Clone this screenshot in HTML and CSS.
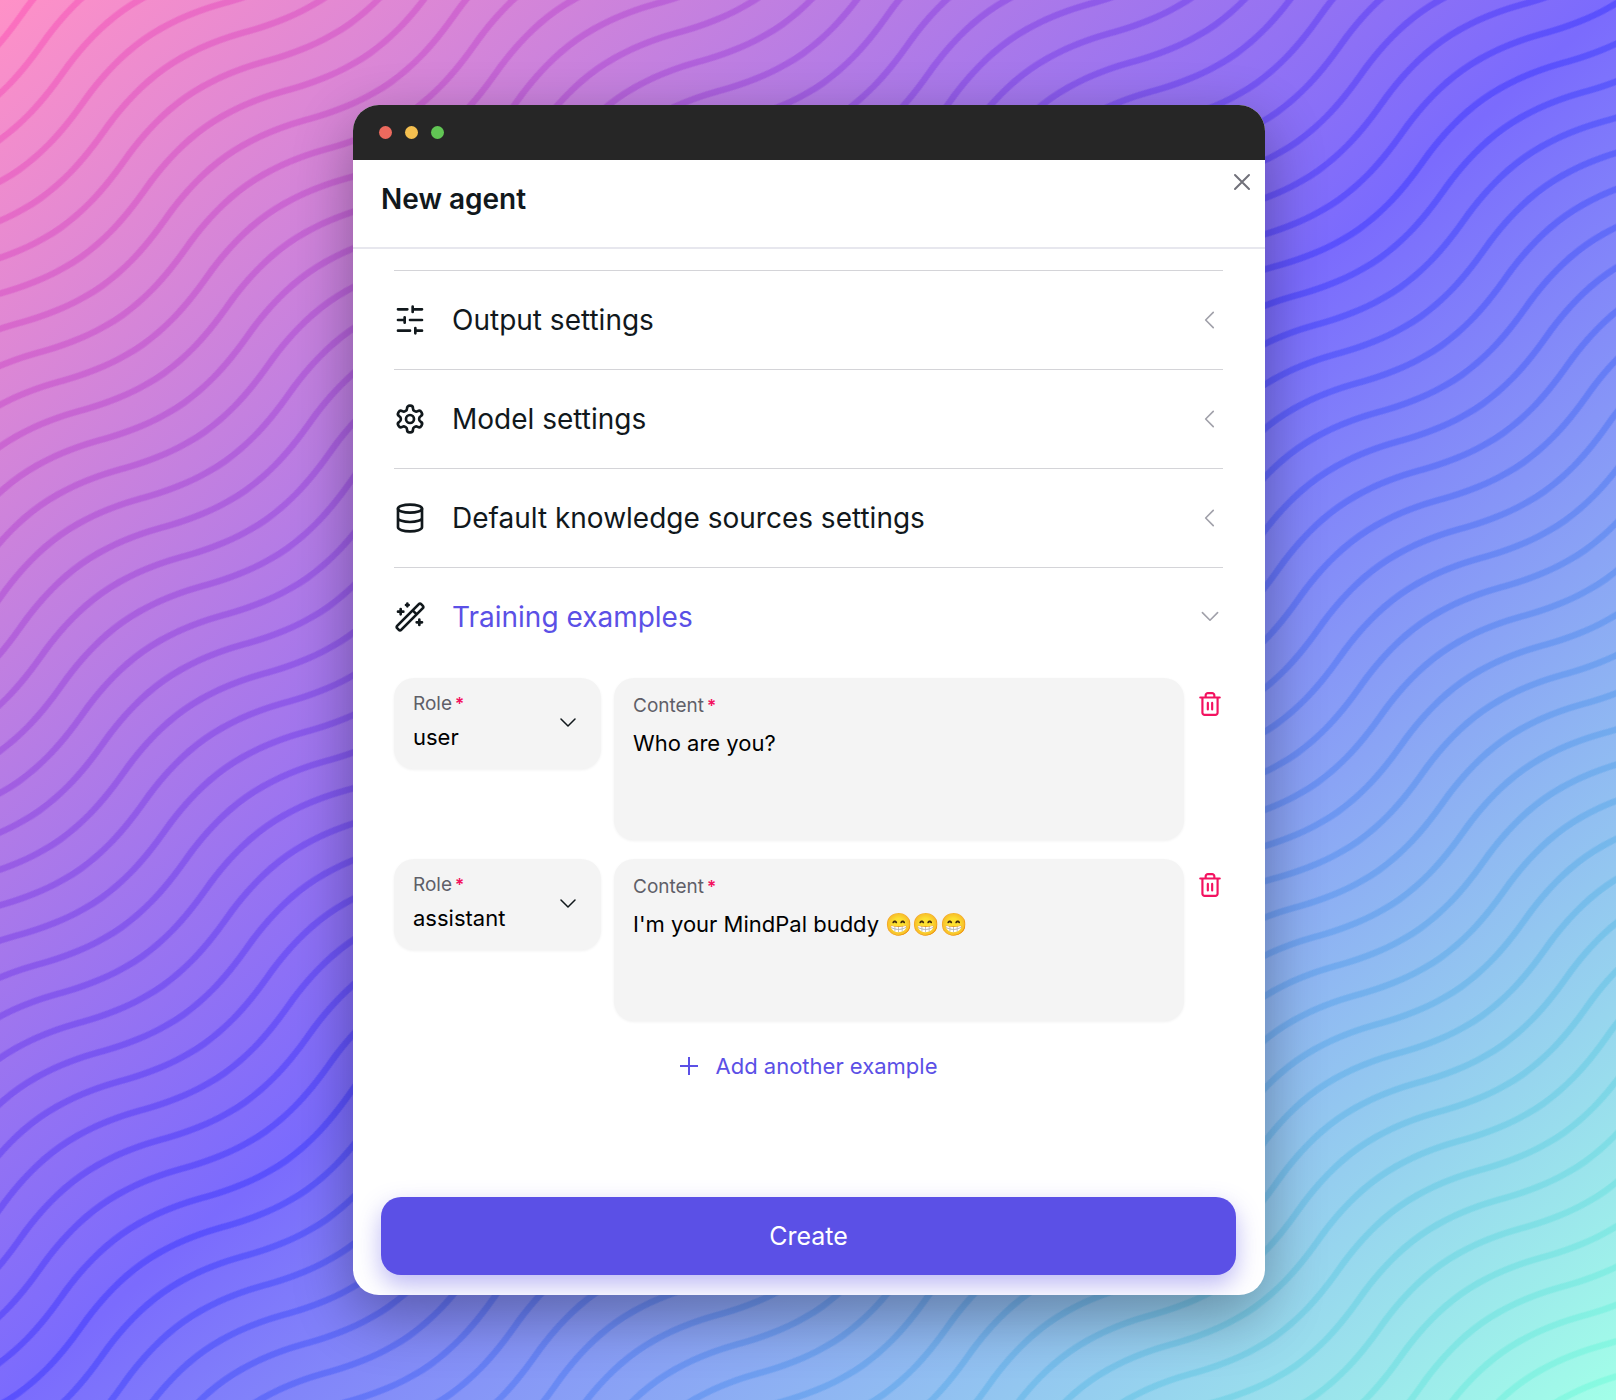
FILE: index.html
```html
<!DOCTYPE html>
<html lang="en">
<head>
<meta charset="utf-8">
<meta name="viewport" content="width=device-width, initial-scale=1">
<title>New agent</title>
<link rel="stylesheet" href="styles.css">
</head>
<body>
<svg class="backdrop" aria-hidden="true">
  <defs>
    <linearGradient id="base" x1="0" y1="0" x2="1" y2="1">
      <stop offset="0" stop-color="#ff91c7"/>
      <stop offset="0.5" stop-color="#7b6bfd"/>
      <stop offset="1" stop-color="#a2ffe8"/>
    </linearGradient>
    <linearGradient id="ink" x1="0" y1="0" x2="1" y2="1">
      <stop offset="0" stop-color="#ff70bd"/>
      <stop offset="0.5" stop-color="#5a50fd"/>
      <stop offset="1" stop-color="#88fee0"/>
    </linearGradient>
    <pattern id="waves" patternUnits="userSpaceOnUse" width="353.4" height="35.69" patternTransform="rotate(-35.2) translate(183.3 168.1)">
      <g fill="none" stroke="#fff" stroke-width="6.4">
        <path id="wave" d="M-176.7 0C-112.4 -23 -64.3 -23 0 0S112.4 23 176.7 0S289.1 -23 353.4 0S465.8 23 530.1 0"/>
        <use href="#wave" y="-35.69"/>
        <use href="#wave" y="35.69"/>
        <use href="#wave" y="71.38"/>
      </g>
    </pattern>
    <mask id="lines"><rect width="100%" height="100%" fill="url(#waves)"/></mask>
  </defs>
  <rect width="100%" height="100%" fill="url(#base)"/>
  <rect width="100%" height="100%" fill="url(#ink)" mask="url(#lines)"/>
</svg>

<main class="window">
  <div class="titlebar">
    <span class="light light-red"></span>
    <span class="light light-yellow"></span>
    <span class="light light-green"></span>
  </div>

  <header class="header">
    <h1 class="title">New agent</h1>
    <button class="icon-button close" type="button" aria-label="Close">
      <svg width="24" height="24" viewBox="0 0 24 24" fill="none" stroke="currentColor" stroke-width="2" stroke-linecap="round"><path d="M5 5l14 14M19 5L5 19"/></svg>
    </button>
  </header>

  <form class="form">
    <div class="sections">
      <button class="section" type="button" aria-expanded="false">
        <svg class="section-icon" viewBox="0 0 24 24"><path d="M21 4h-7M10 4H3M21 12h-9M8 12H3M21 20h-5M12 20H3M14 2v4M8 10v4M16 18v4"/></svg>
        <span class="section-name">Output settings</span>
        <svg class="indicator" viewBox="0 0 24 24"><path d="M15 19l-7-7 7-7"/></svg>
      </button>
      <button class="section" type="button" aria-expanded="false">
        <svg class="section-icon" viewBox="0 0 24 24"><path d="M12.22 2h-.44a2 2 0 0 0-2 2v.18a2 2 0 0 1-1 1.73l-.43.25a2 2 0 0 1-2 0l-.15-.08a2 2 0 0 0-2.73.73l-.22.38a2 2 0 0 0 .73 2.73l.15.1a2 2 0 0 1 1 1.72v.51a2 2 0 0 1-1 1.74l-.15.09a2 2 0 0 0-.73 2.73l.22.38a2 2 0 0 0 2.73.73l.15-.08a2 2 0 0 1 2 0l.43.25a2 2 0 0 1 1 1.73V20a2 2 0 0 0 2 2h.44a2 2 0 0 0 2-2v-.18a2 2 0 0 1 1-1.73l.43-.25a2 2 0 0 1 2 0l.15.08a2 2 0 0 0 2.73-.73l.22-.39a2 2 0 0 0-.73-2.73l-.15-.08a2 2 0 0 1-1-1.74v-.5a2 2 0 0 1 1-1.74l.15-.09a2 2 0 0 0 .73-2.73l-.22-.38a2 2 0 0 0-2.73-.73l-.15.08a2 2 0 0 1-2 0l-.43-.25a2 2 0 0 1-1-1.73V4a2 2 0 0 0-2-2z"/><circle cx="12" cy="12" r="3"/></svg>
        <span class="section-name">Model settings</span>
        <svg class="indicator" viewBox="0 0 24 24"><path d="M15 19l-7-7 7-7"/></svg>
      </button>
      <button class="section" type="button" aria-expanded="false">
        <svg class="section-icon" viewBox="0 0 24 24"><ellipse cx="12" cy="5" rx="9" ry="3"/><path d="M3 5v14a9 3 0 0 0 18 0V5M3 12a9 3 0 0 0 18 0"/></svg>
        <span class="section-name">Default knowledge sources settings</span>
        <svg class="indicator" viewBox="0 0 24 24"><path d="M15 19l-7-7 7-7"/></svg>
      </button>
      <button class="section section-open" type="button" aria-expanded="true">
        <svg class="section-icon" viewBox="0 0 24 24"><path d="M21.64 3.64l-1.28-1.28a1.21 1.21 0 0 0-1.72 0L2.36 18.64a1.21 1.21 0 0 0 0 1.72l1.28 1.28a1.2 1.2 0 0 0 1.72 0L21.64 5.36a1.2 1.2 0 0 0 0-1.72M14 7l3 3M5 6v4M19 14v4M10 2v2M7 8H3M21 16h-4M11 3H9"/></svg>
        <span class="section-name">Training examples</span>
        <svg class="indicator" viewBox="0 0 24 24"><path d="M5 8l7 7 7-7"/></svg>
      </button>

      <div class="examples">
        <div class="example">
          <div class="field field-role">
            <label class="label" for="role-1">Role<span class="required">*</span></label>
            <select class="value" id="role-1"><option>user</option><option>assistant</option></select>
            <svg class="caret" viewBox="0 0 16 9"><path d="M1 1l7 7 7-7"/></svg>
          </div>
          <div class="field field-content">
            <label class="label" for="content-1">Content<span class="required">*</span></label>
            <textarea class="value" id="content-1">Who are you?</textarea>
          </div>
          <button class="icon-button delete" type="button" aria-label="Delete example">
            <svg width="26" height="26" viewBox="0 0 24 24" fill="none" stroke="currentColor" stroke-width="2" stroke-linecap="round" stroke-linejoin="round"><path d="M3 6h18M19 6v14c0 1-1 2-2 2H7c-1 0-2-1-2-2V6M8 6V4c0-1 1-2 2-2h4c1 0 2 1 2 2v2M10 11v6M14 11v6"/></svg>
          </button>
        </div>
        <div class="example">
          <div class="field field-role">
            <label class="label" for="role-2">Role<span class="required">*</span></label>
            <select class="value" id="role-2"><option>user</option><option selected>assistant</option></select>
            <svg class="caret" viewBox="0 0 16 9"><path d="M1 1l7 7 7-7"/></svg>
          </div>
          <div class="field field-content">
            <label class="label" for="content-2">Content<span class="required">*</span></label>
            <textarea class="value" id="content-2">I'm your MindPal buddy 😁😁😁</textarea>
          </div>
          <button class="icon-button delete" type="button" aria-label="Delete example">
            <svg width="26" height="26" viewBox="0 0 24 24" fill="none" stroke="currentColor" stroke-width="2" stroke-linecap="round" stroke-linejoin="round"><path d="M3 6h18M19 6v14c0 1-1 2-2 2H7c-1 0-2-1-2-2V6M8 6V4c0-1 1-2 2-2h4c1 0 2 1 2 2v2M10 11v6M14 11v6"/></svg>
          </button>
        </div>
        <button class="add" type="button">
          <svg width="18" height="18" viewBox="0 0 18 18" fill="none" stroke="currentColor" stroke-width="2"><path d="M9 0v18M0 9h18"/></svg>
          Add another example
        </button>
      </div>
    </div>
    <button class="create" type="submit">Create</button>
  </form>
</main>
</body>
</html>
```
FILE: styles.css
```css
* {
  box-sizing: border-box;
}

body {
  margin: 0;
  min-height: 100vh;
  padding: 105px 351px 106px 353px;
  position: relative;
  font-family: Inter, "Noto Color Emoji", "Liberation Sans", sans-serif;
  color: #11181c;
}

button,
select,
textarea {
  margin: 0;
  padding: 0;
  border: 0;
  background: none;
  font-family: inherit;
  color: inherit;
}

svg {
  display: block;
  flex: none;
}

.backdrop {
  position: absolute;
  inset: 0;
  width: 100%;
  height: 100%;
}

.window {
  position: relative;
  background: #fff;
  border-radius: 26px;
  overflow: hidden;
  box-shadow: 0 20px 60px rgba(0, 0, 0, 0.32);
}

.titlebar {
  display: flex;
  align-items: center;
  gap: 13px;
  height: 55px;
  padding: 0 26px;
  background: #262626;
}

.light {
  width: 13px;
  height: 13px;
  border-radius: 50%;
}

.light-red { background: #ec6a5e; }
.light-yellow { background: #f4bf4f; }
.light-green { background: #61c554; }

.header {
  display: flex;
  justify-content: space-between;
  align-items: flex-start;
  padding: 10px 11px 28px 28px;
  border-bottom: 2px solid #e7e7ee;
}

.title {
  margin: 9px 0 0;
  font-size: 28px;
  line-height: 40px;
  font-weight: 600;
}

.icon-button {
  display: flex;
}

.close {
  color: #71717a;
}

.form {
  display: flex;
  flex-direction: column;
  gap: 115px;
  padding: 21px 29px 20px 28px;
}

.sections {
  padding: 0 13px;
}

.section {
  display: flex;
  align-items: center;
  gap: 26px;
  width: 100%;
  height: 99px;
  border-top: 1px solid #d4d4d8;
  font-size: 28px;
  text-align: left;
}

.section-name {
  flex: 1;
}

.section-open .section-name {
  color: #5b50e6;
}

.section-icon {
  width: 32px;
  height: 32px;
  fill: none;
  stroke: currentColor;
  stroke-width: 2;
  stroke-linecap: round;
  stroke-linejoin: round;
}

.indicator {
  width: 26px;
  height: 26px;
  fill: none;
  stroke: #a1a1aa;
  stroke-width: 1.5;
  stroke-linecap: round;
  stroke-linejoin: round;
}

.examples {
  display: flex;
  flex-direction: column;
  gap: 19px;
  padding-top: 12px;
}

.example {
  display: grid;
  grid-template-columns: 207px 1fr 26px;
  align-items: start;
  column-gap: 13px;
}

.field {
  display: grid;
  padding: 13px 19px;
  border-radius: 20px;
  background: #f4f4f4;
  box-shadow: 0 1px 3px rgba(0, 0, 0, 0.06);
}

.field-role {
  grid-template-columns: 1fr auto;
  align-content: start;
  align-items: center;
  row-gap: 4px;
  height: 91px;
}

.field-role .label {
  grid-area: 1 / 1;
}

.field-role .value {
  grid-area: 2 / 1;
  appearance: none;
}

.field-content {
  grid-template-rows: auto 1fr;
  row-gap: 8px;
  height: 162px;
  padding-top: 15px;
}

.label {
  font-size: 19px;
  line-height: 26px;
  color: #5f5f68;
}

.required {
  margin-left: 3px;
  font-size: 17px;
  font-weight: 600;
  color: #f31260;
}

.value {
  width: 100%;
  font-size: 22px;
  line-height: 32px;
  color: #000;
  resize: none;
  overflow: hidden;
}

.caret {
  grid-area: 1 / 2 / 3 / 3;
  width: 16px;
  height: 9px;
  margin-right: 6px;
  fill: none;
  stroke: #11181c;
  stroke-width: 1.5;
  stroke-linecap: round;
  stroke-linejoin: round;
}

.delete {
  margin-top: 13px;
  color: #f31260;
}

.add {
  display: flex;
  align-items: center;
  align-self: center;
  gap: 18px;
  margin-top: 10px;
  font-size: 22px;
  line-height: 32px;
  color: #5b50e6;
}

.create {
  height: 78px;
  border-radius: 20px;
  background: #5b50e6;
  box-shadow: 0 10px 24px rgba(91, 80, 230, 0.4);
  color: #fff;
  font-size: 25px;
}
```
